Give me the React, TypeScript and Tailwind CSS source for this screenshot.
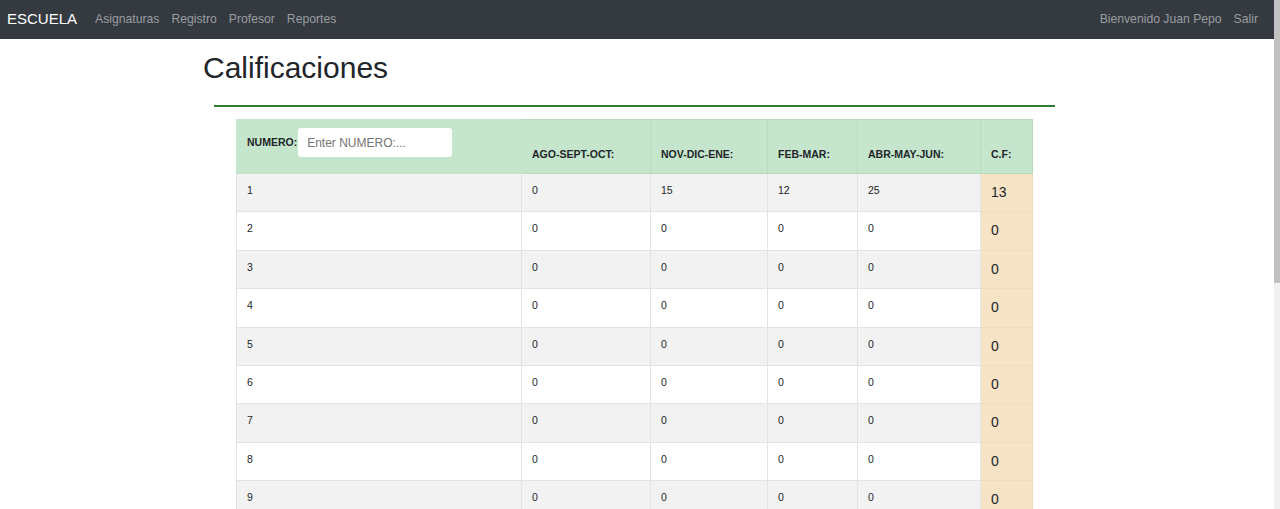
import { useState } from "react";

const cols = [
    { label: "AGO-SEPT-OCT:", w: "w-[129px]" },
    { label: "NOV-DIC-ENE:", w: "w-[117px]" },
    { label: "FEB-MAR:", w: "w-[90px]" },
    { label: "ABR-MAY-JUN:", w: "w-[123px]" },
];

const initialRows = Array.from({ length: 15 }, (_, i) => ({
    numero: i + 1,
    notas: i === 0 ? [0, 15, 12, 25] : [0, 0, 0, 0],
}));

export default function App() {
    const [numero, setNumero] = useState<string>("");
    const rows = initialRows;

    return (
        <div className="h-screen overflow-hidden flex bg-white text-[#212529]" style={{ fontFamily: '"Liberation Sans", Arial, sans-serif' }}>
            <div className="flex-1 min-w-0">
                <nav className="h-[39px] bg-[#343a40] flex items-center pl-[7px] pr-[16px] pb-[1px]">
                    <a className="text-white text-[15px]">ESCUELA</a>
                    <div className="flex gap-[12px] ml-[18px] text-[12.2px] text-[#9a9da0]">
                        <a>Asignaturas</a>
                        <a>Registro</a>
                        <a>Profesor</a>
                        <a>Reportes</a>
                    </div>
                    <div className="ml-auto flex gap-[12px] text-[12.2px] text-[#9a9da0]">
                        <span>Bienvenido Juan Pepo</span>
                        <a>Salir</a>
                    </div>
                </nav>

                <h1 className="ml-[203px] mt-[11px] text-[30px] leading-[1.2]">Calificaciones</h1>
                <div className="ml-[214px] w-[841px] mt-[19px] h-[2px] bg-[#2e7d32]"></div>

                <div className="ml-[236px] w-[796px] mt-[12px] pb-10">
                    <table className="w-full table-fixed border-collapse text-[10.5px]">
                        <thead>
                            <tr className="bg-[#c5e6cc] h-[54px]">
                                <th className="w-[285px] border border-[#c5e6cc] align-top text-left pt-[8px] px-[10px] font-bold">
                                    <div className="flex items-center">
                                        <span>NUMERO:</span>
                                        <input
                                            className="ml-[1px] w-[154px] h-[29px] bg-white rounded-[3px] px-[9px] text-[12px] font-normal outline-none placeholder:text-[#757575]"
                                            placeholder="Enter NUMERO:..."
                                            value={numero}
                                            onChange={(e) => setNumero(e.target.value)}
                                        />
                                    </div>
                                </th>
                                {cols.map((c) => (
                                    <th key={c.label} className={`${c.w} border border-[#b9dcc1] align-bottom text-left px-[10px] pb-[10px] font-bold`}>
                                        {c.label}
                                    </th>
                                ))}
                                <th className="w-[52px] border border-[#b9dcc1] align-bottom text-left px-[10px] pb-[10px] font-bold">C.F:</th>
                            </tr>
                        </thead>
                        <tbody>
                            {rows.map((r, i) => {
                                const cf = Math.round(r.notas.reduce((a, b) => a + b, 0) / 4);
                                return (
                                    <tr key={r.numero} className={i % 2 === 0 ? "bg-[#f2f2f2] h-[38.4px]" : "bg-white h-[38.4px]"}>
                                        <td className="border border-[#e3e3e3] align-top px-[10px] pt-[9px]">{r.numero}</td>
                                        {r.notas.map((n, j) => (
                                            <td key={j} className="border border-[#e3e3e3] align-top px-[10px] pt-[9px]">
                                                {n}
                                            </td>
                                        ))}
                                        <td className="border border-[#f0dcbc] bg-[#f7e4c6] align-top px-[10px] pt-[10px] text-[14px] leading-[1.2]">{cf}</td>
                                    </tr>
                                );
                            })}
                        </tbody>
                    </table>
                </div>
            </div>
            {/* scroll bar */}
            <div className="w-[6px] shrink-0 bg-[#f1f1f1] flex flex-col">
                <div className="h-[283px] bg-[#c1c1c1]"></div>
            </div>
        </div>
    );
}
